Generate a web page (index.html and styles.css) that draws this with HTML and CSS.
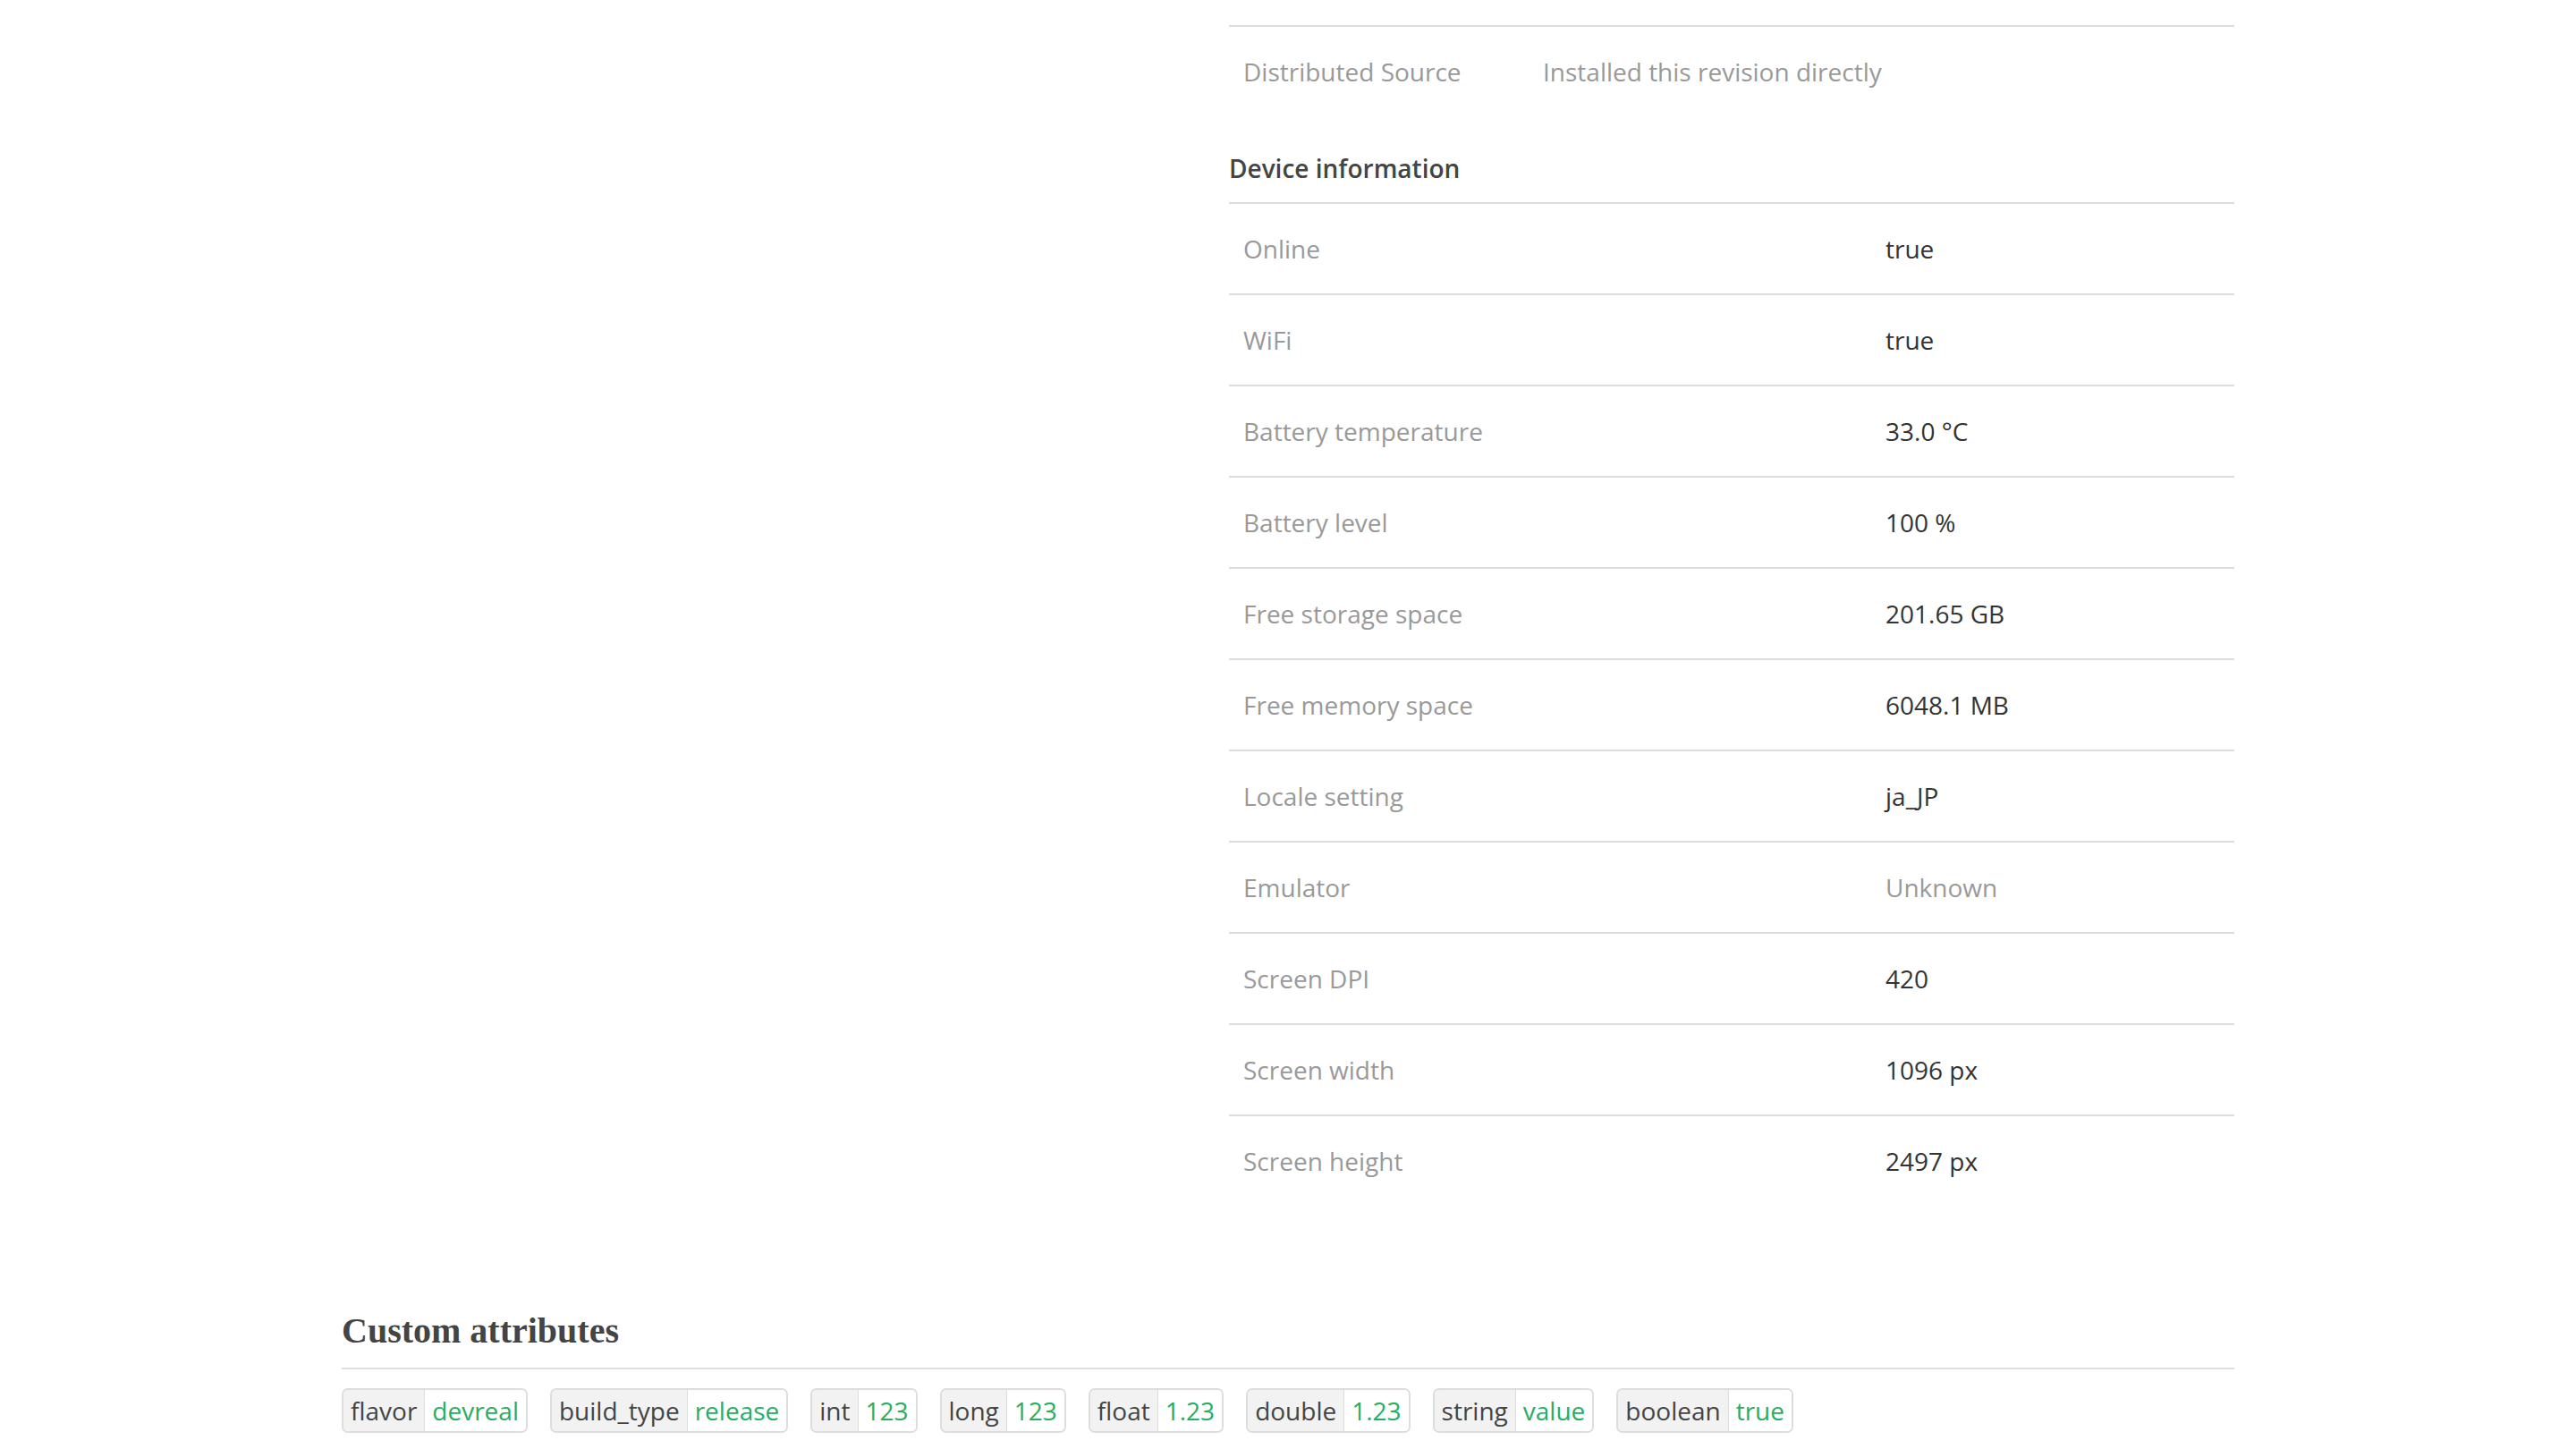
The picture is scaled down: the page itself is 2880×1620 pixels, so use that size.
FILE: index.html
```html
<!DOCTYPE html>
<html lang="en">
<head>
<meta charset="utf-8">
<title>Device information</title>
<link rel="stylesheet" href="styles.css">
</head>
<body>
<div class="page">
  <div class="top">
    <div class="left-col"></div>
    <div class="right-col">
      <div class="kv-table summary">
        <div class="kv-row">
          <div class="k">Distributed Source</div>
          <div class="v muted">Installed this revision directly</div>
        </div>
      </div>
      <h4 class="section-title">Device information</h4>
      <div class="kv-table device">
        <div class="kv-row"><div class="k">Online</div><div class="v">true</div></div>
        <div class="kv-row"><div class="k">WiFi</div><div class="v">true</div></div>
        <div class="kv-row"><div class="k">Battery temperature</div><div class="v">33.0 °C</div></div>
        <div class="kv-row"><div class="k">Battery level</div><div class="v">100 %</div></div>
        <div class="kv-row"><div class="k">Free storage space</div><div class="v">201.65 GB</div></div>
        <div class="kv-row"><div class="k">Free memory space</div><div class="v">6048.1 MB</div></div>
        <div class="kv-row"><div class="k">Locale setting</div><div class="v">ja_JP</div></div>
        <div class="kv-row"><div class="k">Emulator</div><div class="v muted">Unknown</div></div>
        <div class="kv-row"><div class="k">Screen DPI</div><div class="v">420</div></div>
        <div class="kv-row"><div class="k">Screen width</div><div class="v">1096 px</div></div>
        <div class="kv-row"><div class="k">Screen height</div><div class="v">2497 px</div></div>
      </div>
    </div>
  </div>
  <section class="custom">
    <h3 class="custom-title">Custom attributes</h3>
    <div class="tags">
      <span class="tag"><span class="tag-key">flavor</span><span class="tag-val">devreal</span></span>
      <span class="tag"><span class="tag-key">build_type</span><span class="tag-val">release</span></span>
      <span class="tag"><span class="tag-key">int</span><span class="tag-val">123</span></span>
      <span class="tag"><span class="tag-key">long</span><span class="tag-val">123</span></span>
      <span class="tag"><span class="tag-key">float</span><span class="tag-val">1.23</span></span>
      <span class="tag"><span class="tag-key">double</span><span class="tag-val">1.23</span></span>
      <span class="tag"><span class="tag-key">string</span><span class="tag-val">value</span></span>
      <span class="tag"><span class="tag-key">boolean</span><span class="tag-val">true</span></span>
    </div>
  </section>
</div>
</body>
</html>
```

FILE: styles.css
```css
html, body {
  margin: 0;
  padding: 0;
  background: #ffffff;
}

body {
  font-family: "Open Sans", "Liberation Sans", sans-serif;
  font-size: 28px;
  line-height: 40px;
  color: #333333;
  padding-top: 28px;
}

.page {
  width: 2116px;
  margin: 0 auto;
}

.top {
  display: grid;
  grid-template-columns: 992px 1124px;
}

.kv-row {
  display: grid;
  border-top: 2px solid #dddddd;
}

.summary .kv-row {
  grid-template-columns: 335px 1fr;
}

.device .kv-row {
  grid-template-columns: 718px 1fr;
}

.k,
.v {
  padding: 30px 16px;
}

.k {
  color: #999999;
}

.v {
  color: #333333;
}

.v.muted {
  color: #999999;
}

.section-title {
  margin: 38px 0 18px;
  font-size: 28px;
  line-height: 40px;
  font-weight: 600;
  color: #444444;
}

.custom {
  margin-top: 118px;
}

.custom-title {
  margin: 0;
  padding-bottom: 19px;
  border-bottom: 2px solid #dddddd;
  font-family: "Liberation Serif", "Times New Roman", serif;
  font-size: 40px;
  line-height: 44px;
  font-weight: 700;
  color: #444444;
}

.tags {
  display: flex;
  flex-wrap: wrap;
  gap: 25px;
  margin-top: 21px;
}

.tag {
  display: inline-flex;
  border: 2px solid #dddddd;
  border-radius: 7px;
  overflow: hidden;
  line-height: 40px;
}

.tag-key,
.tag-val {
  padding: 3px 8px;
}

.tag-key {
  background: #f2f2f2;
  color: #444444;
  border-right: 1px solid #dddddd;
}

.tag-val {
  background: #ffffff;
  color: #27ae60;
}
```
